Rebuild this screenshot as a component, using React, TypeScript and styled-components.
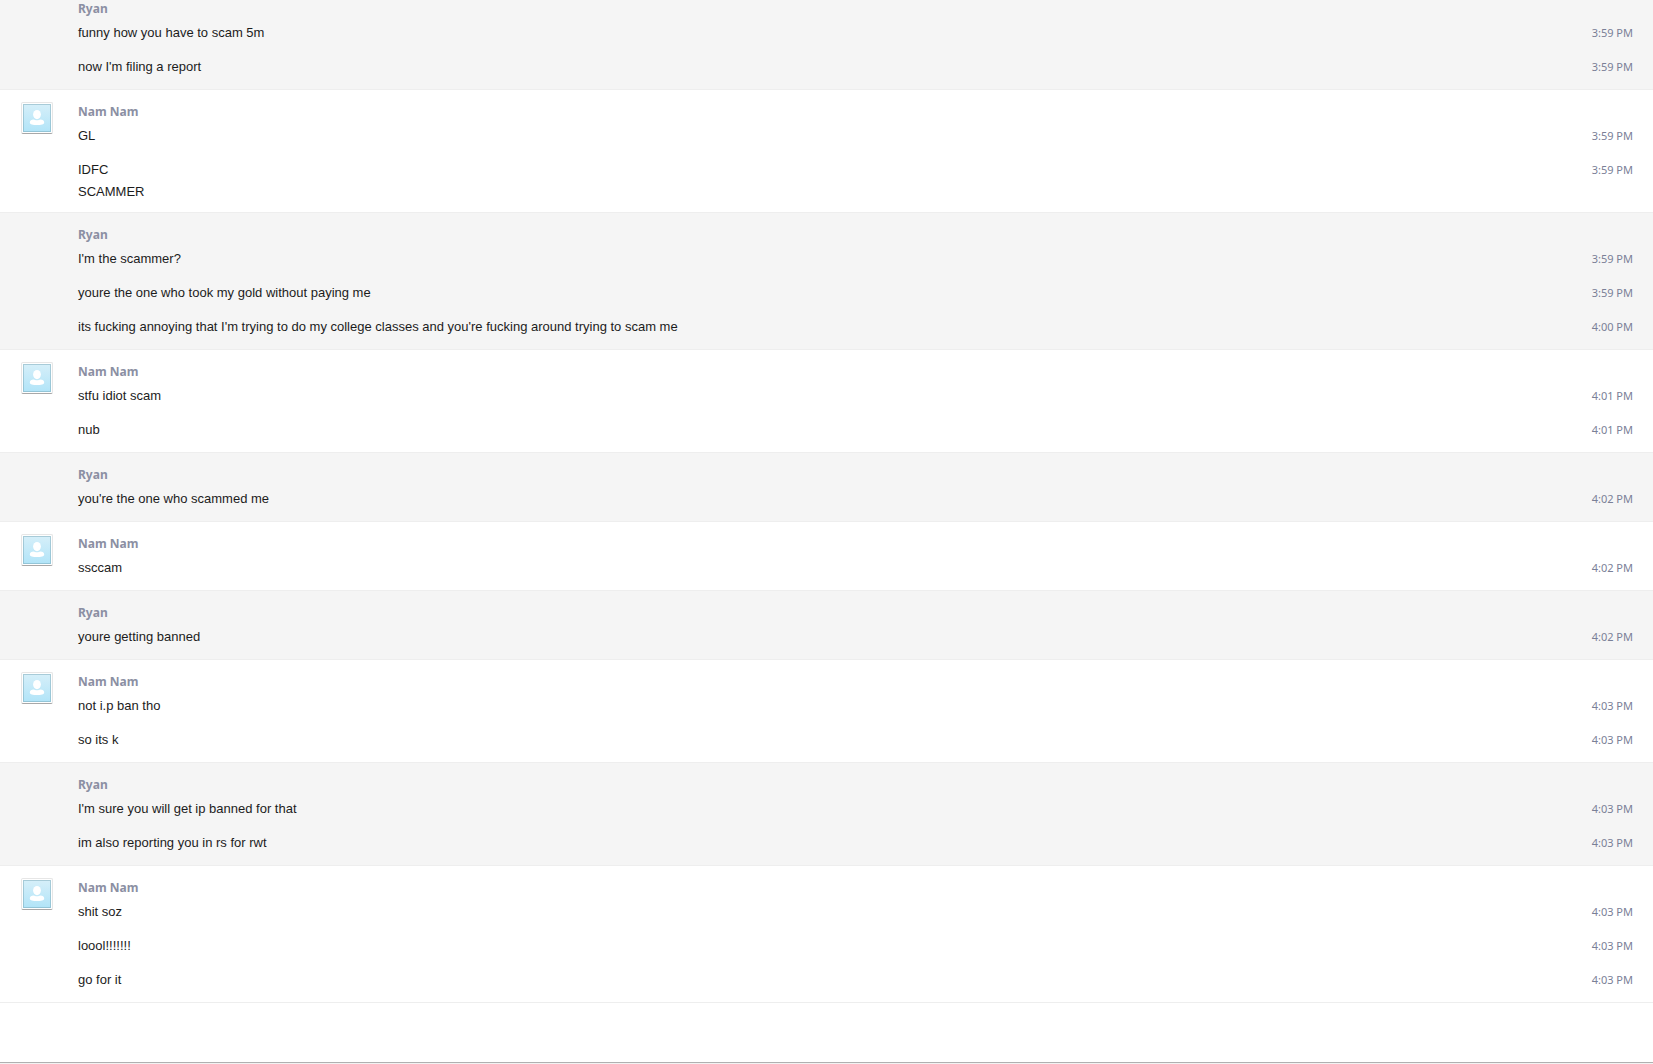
import React from "react";
import styled, { createGlobalStyle } from "styled-components";

const GlobalStyle = createGlobalStyle`
  *, *::before, *::after {
    box-sizing: border-box;
  }
  body {
    margin: 0;
    background: #ffffff;
  }
`;

const Page = styled.div`
  display: flex;
  flex-direction: column;
  min-height: 100vh;
  font-family: "Liberation Sans", Arial, Helvetica, sans-serif;
  font-size: 13px;
  color: #1c1c1c;
`;

const Log = styled.main`
  flex: 1;
`;

const Group = styled.section<{ $own: boolean; $continued: boolean }>`
  display: grid;
  grid-template-columns: 78px minmax(0, 1fr);
  padding: ${(p) => (p.$continued ? 0 : 12)}px 20px 4px 0;
  background: ${(p) => (p.$own ? "#f5f5f5" : "#ffffff")};
  border-bottom: 1px solid #eeeeee;
`;

const AvatarCell = styled.div`
  padding-left: 21px;
`;

const AvatarFrame = styled.div`
  width: 32px;
  height: 32px;
  padding: 1px;
  background: #ffffff;
  border: 1px solid #e6e6e6;
  border-bottom-color: #a8a8a8;
  border-radius: 2px;
`;

const AvatarArt = styled.svg`
  display: block;
  width: 28px;
  height: 28px;
`;

const Sender = styled.h2<{ $continued: boolean }>`
  margin: 0;
  height: ${(p) => (p.$continued ? 17 : 18)}px;
  font-family: "Noto Sans", "Open Sans", sans-serif;
  font-size: 12px;
  font-weight: 700;
  line-height: ${(p) => (p.$continued ? 18 : 20)}px;
  color: #8b8fa3;
`;

const Row = styled.div`
  display: flex;
  justify-content: space-between;
  gap: 24px;
  min-height: 34px;
  padding: 5px 0;
  line-height: 22px;
`;

const Text = styled.p`
  margin: 0;
  white-space: pre-line;
`;

const Time = styled.time`
  flex: none;
  font-family: "Noto Sans", "Open Sans", sans-serif;
  font-size: 11px;
  color: #7a8097;
`;

const Footer = styled.footer`
  height: 2px;
  background: #f2f2f2;
  border-top: 1px solid #b0b0b0;
`;

function Avatar({ name }: { name: string }) {
  return (
    <AvatarFrame>
      <AvatarArt viewBox="0 0 28 28" role="img" aria-label={name}>
        <defs>
          <linearGradient id="sky" x1="0" y1="0" x2="0" y2="1">
            <stop offset="0" stopColor="#d6eff9" />
            <stop offset="1" stopColor="#b1e4f8" />
          </linearGradient>
        </defs>
        <rect width="28" height="28" fill="url(#sky)" />
        <rect x="0.5" y="0.5" width="27" height="27" fill="none" stroke="#6f9fb0" strokeOpacity="0.45" />
        <ellipse cx="14" cy="10.6" rx="3.9" ry="4.6" fill="#fff" />
        <path
          d="M6.8 18.600c0-2 1.600-3.200 3.800-3.200 1.200 0 1.800.9 3.400.9s2.200-.9 3.400-.9c2.200 0 3.800 1.200 3.800 3.200 0 1.900-3.200 2.500-7.200 2.500s-7.200-.6-7.200-2.500z"
          fill="#fff"
        />
      </AvatarArt>
    </AvatarFrame>
  );
}

type Message = { text: string; time: string };
type Block = { sender: "Ryan" | "Nam Nam"; messages: Message[] };

const blocks: Block[] = [
  {
    sender: "Ryan",
    messages: [
      { text: "funny how you have to scam 5m", time: "3:59 PM" },
      { text: "now I'm filing a report", time: "3:59 PM" },
    ],
  },
  {
    sender: "Nam Nam",
    messages: [
      { text: "GL", time: "3:59 PM" },
      { text: "IDFC\nSCAMMER", time: "3:59 PM" },
    ],
  },
  {
    sender: "Ryan",
    messages: [
      { text: "I'm the scammer?", time: "3:59 PM" },
      { text: "youre the one who took my gold without paying me", time: "3:59 PM" },
      {
        text: "its fucking annoying that I'm trying to do my college classes and you're fucking around trying to scam me",
        time: "4:00 PM",
      },
    ],
  },
  {
    sender: "Nam Nam",
    messages: [
      { text: "stfu idiot scam", time: "4:01 PM" },
      { text: "nub", time: "4:01 PM" },
    ],
  },
  { sender: "Ryan", messages: [{ text: "you're the one who scammed me", time: "4:02 PM" }] },
  { sender: "Nam Nam", messages: [{ text: "ssccam", time: "4:02 PM" }] },
  { sender: "Ryan", messages: [{ text: "youre getting banned", time: "4:02 PM" }] },
  {
    sender: "Nam Nam",
    messages: [
      { text: "not i.p ban tho", time: "4:03 PM" },
      { text: "so its k", time: "4:03 PM" },
    ],
  },
  {
    sender: "Ryan",
    messages: [
      { text: "I'm sure you will get ip banned for that", time: "4:03 PM" },
      { text: "im also reporting you in rs for rwt", time: "4:03 PM" },
    ],
  },
  {
    sender: "Nam Nam",
    messages: [
      { text: "shit soz", time: "4:03 PM" },
      { text: "loool!!!!!!!", time: "4:03 PM" },
      { text: "go for it", time: "4:03 PM" },
    ],
  },
];

export default function App() {
  return (
    <Page>
      <GlobalStyle />
      <Log>
        {blocks.map((block, i) => {
          const own = block.sender === "Ryan";
          const continued = i === 0;
          return (
            <Group key={i} $own={own} $continued={continued}>
              <AvatarCell>{!own && <Avatar name={block.sender} />}</AvatarCell>
              <div>
                <Sender $continued={continued}>{block.sender}</Sender>
                {block.messages.map((message, j) => (
                  <Row key={j}>
                    <Text>{message.text}</Text>
                    <Time>{message.time}</Time>
                  </Row>
                ))}
              </div>
            </Group>
          );
        })}
      </Log>
      <Footer />
    </Page>
  );
}
